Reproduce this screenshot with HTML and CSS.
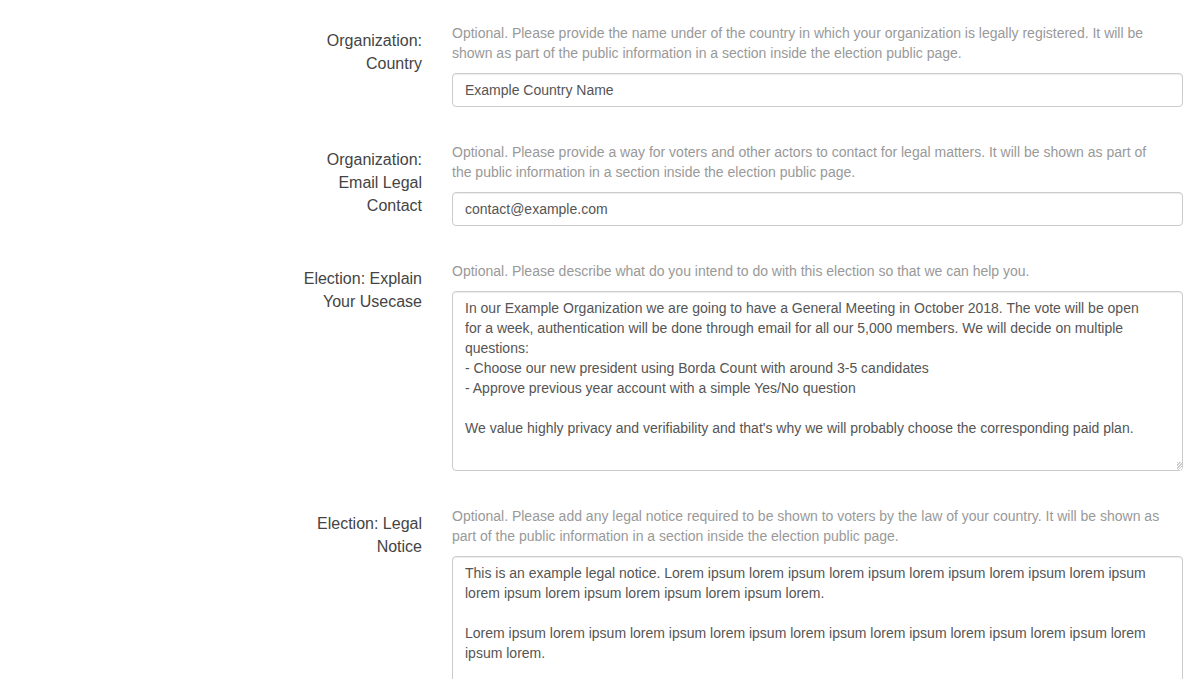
FILE: index.html
```html
<!DOCTYPE html>
<html lang="en">
<head>
<meta charset="utf-8">
<title>Election registration</title>
<link rel="stylesheet" href="styles.css">
</head>
<body>
<form class="form">
  <div class="form-group">
    <label class="form-label" for="country">Organization: Country</label>
    <div class="form-field">
      <p class="help" id="country-help">Optional. Please provide the name under of the country in which your organization is legally registered. It will be shown as part of the public information in a section inside the election public page.</p>
      <input class="control" id="country" type="text" aria-describedby="country-help" value="Example Country Name">
    </div>
  </div>
  <div class="form-group">
    <label class="form-label" for="contact">Organization: Email Legal Contact</label>
    <div class="form-field">
      <p class="help" id="contact-help">Optional. Please provide a way for voters and other actors to contact for legal matters. It will be shown as part of the public information in a section inside the election public page.</p>
      <input class="control" id="contact" type="text" aria-describedby="contact-help" value="contact@example.com">
    </div>
  </div>
  <div class="form-group">
    <label class="form-label" for="usecase">Election: Explain Your Usecase</label>
    <div class="form-field">
      <p class="help" id="usecase-help">Optional. Please describe what do you intend to do with this election so that we can help you.</p>
      <textarea class="control control-area" id="usecase" rows="8" aria-describedby="usecase-help">In our Example Organization we are going to have a General Meeting in October 2018. The vote will be open for a week, authentication will be done through email for all our 5,000 members. We will decide on multiple questions:
- Choose our new president using Borda Count with around 3-5 candidates
- Approve previous year account with a simple Yes/No question

We value highly privacy and verifiability and that's why we will probably choose the corresponding paid plan.
</textarea>
    </div>
  </div>
  <div class="form-group">
    <label class="form-label" for="notice">Election: Legal Notice</label>
    <div class="form-field">
      <p class="help" id="notice-help">Optional. Please add any legal notice required to be shown to voters by the law of your country. It will be shown as part of the public information in a section inside the election public page.</p>
      <textarea class="control control-area" id="notice" rows="8" aria-describedby="notice-help">This is an example legal notice. Lorem ipsum lorem ipsum lorem ipsum lorem ipsum lorem ipsum lorem ipsum lorem ipsum lorem ipsum lorem ipsum lorem ipsum lorem.

Lorem ipsum lorem ipsum lorem ipsum lorem ipsum lorem ipsum lorem ipsum lorem ipsum lorem ipsum lorem ipsum lorem.</textarea>
    </div>
  </div>
</form>
</body>
</html>
```
FILE: styles.css
```css
* {
  box-sizing: border-box;
}

html {
  scrollbar-width: none;
}

body {
  margin: 0;
  background: #fff;
  font-family: "Liberation Sans", Arial, sans-serif;
  font-size: 14px;
  line-height: 20px;
}

.form {
  padding: 23px 9px 23px 0;
}

.form-group {
  display: grid;
  grid-template-columns: 422px minmax(0, 1fr);
  column-gap: 30px;
  margin-bottom: 35px;
}

.form-label {
  justify-self: end;
  width: 135px;
  padding-top: 6px;
  color: #444;
  font-size: 16px;
  line-height: 23px;
  text-align: right;
}

.help {
  margin: 0 0 10px;
  padding-right: 16px;
  color: #999;
}

.control {
  display: block;
  width: 100%;
  height: 34px;
  padding: 6px 12px;
  border: 1px solid #ccc;
  border-radius: 4px;
  background: #fff;
  box-shadow: inset 0 1px 1px rgba(0, 0, 0, 0.075);
  color: #555;
  font: inherit;
}

.control-area {
  height: 180px;
  padding-right: 28px;
  resize: vertical;
}

.control-area::-webkit-resizer {
  background: repeating-linear-gradient(135deg, #ccc 0 1px, #fff 1px 2px) right bottom / 5px 8px no-repeat;
}
```
